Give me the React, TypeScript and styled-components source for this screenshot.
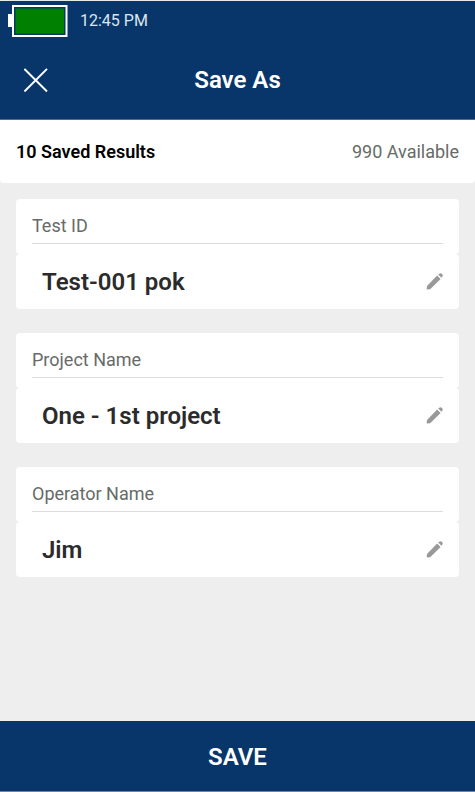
import React from "react";
import styled, { createGlobalStyle } from "styled-components";

const GlobalStyle = createGlobalStyle`
  *, *::before, *::after { box-sizing: border-box; }
  body {
    margin: 0;
    background: #eeeeee;
    font-family: Roboto, "Liberation Sans", sans-serif;
  }
`;

const Screen = styled.div`
  display: flex;
  flex-direction: column;
  min-height: 100vh;
  border-top: 1px solid #e4e9ee;
  border-bottom: 1px solid #6b86a4;
`;

const StatusBar = styled.div`
  display: flex;
  align-items: center;
  gap: 12px;
  height: 39px;
  padding-left: 8px;
  background: #08366a;
  color: #dde5ee;
  font-size: 16px;
  line-height: 20px;
`;

const Header = styled.header`
  display: grid;
  grid-template-columns: 40px 1fr 40px;
  align-items: center;
  height: 80px;
  padding: 0 16px;
  background: #08366a;
  border-bottom: 1px solid #4a6c93;
`;

const Title = styled.h1`
  margin: 0;
  color: #ffffff;
  font-size: 24px;
  font-weight: 600;
  line-height: 32px;
  text-align: center;
`;

const IconButton = styled.button`
  display: flex;
  flex: none;
  align-items: center;
  justify-content: center;
  padding: 0;
  border: 0;
  background: none;
  cursor: pointer;
`;

const Summary = styled.section`
  display: flex;
  align-items: center;
  justify-content: space-between;
  height: 63px;
  padding: 0 16px;
  border-radius: 0 0 4px 4px;
  background: #ffffff;
  font-size: 18px;
  line-height: 22px;
`;

const Saved = styled.strong`
  color: #000000;
  font-weight: 600;
`;

const Available = styled.span`
  color: #666b67;
`;

const Form = styled.form`
  display: flex;
  flex: 1;
  flex-direction: column;
`;

const Fields = styled.div`
  display: flex;
  flex: 1;
  flex-direction: column;
  gap: 24px;
  padding: 16px;
`;

const CardTop = styled.div`
  height: 55px;
  padding: 0 16px;
  border-radius: 4px;
  background: #ffffff;
`;

const Label = styled.label`
  display: block;
  padding: 16px 0 6px;
  border-bottom: 1px solid #dcdcdc;
  color: #666b67;
  font-size: 18px;
  line-height: 22px;
`;

const CardBody = styled.div`
  display: flex;
  align-items: center;
  height: 55px;
  padding: 0 16px 0 26px;
  border-radius: 4px;
  background: #ffffff;
`;

const Value = styled.input`
  flex: 1;
  min-width: 0;
  height: 32px;
  padding: 0;
  border: 0;
  background: none;
  color: #2b2b2b;
  font-family: inherit;
  font-size: 24px;
  font-weight: 600;
`;

const SaveButton = styled.button`
  height: 70px;
  padding: 2px 0 0;
  border: 0;
  background: #08366a;
  color: #ffffff;
  font-family: inherit;
  font-size: 24px;
  font-weight: 600;
  line-height: 32px;
  cursor: pointer;
`;

const BatteryIcon = () => (
  <svg width="60" height="32" viewBox="0 0 60 32" role="img" aria-label="Battery full">
    <rect x="0" y="9" width="5" height="13" fill="#fff" />
    <rect x="5" y="1" width="53.5" height="30" fill="#08366a" stroke="#fff" strokeWidth="2" />
    <rect x="7" y="3" width="49.5" height="26" fill="#008000" stroke="#08366a" strokeWidth="1" />
  </svg>
);

const CloseIcon = () => (
  <svg width="24" height="24" viewBox="0 0 24 24" fill="none" stroke="#fff" strokeWidth="2" aria-hidden="true">
    <path d="M.4.9l22.6 22.6M23 .9L.4 23.5" />
  </svg>
);

const PencilIcon = () => (
  <svg width="17" height="17" viewBox="0 0 17 17" fill="#999" aria-hidden="true">
    <path d="M11.1 2.5l3.5 3.5L4.7 15.7c-.4.4-.8.6-1.3.6l-1.8.2c-.6.1-1-.4-.9-.9l.2-1.8c.1-.5.3-.9.6-1.3z" />
    <path d="M12.2 1.6L13.2.8c.7-.7 1.9-.7 2.6 0l.4.4c.7.7.7 1.8 0 2.6l-.8 1z" />
  </svg>
);

const fields = [
  { id: "test-id", label: "Test ID", value: "Test-001 pok" },
  { id: "project-name", label: "Project Name", value: "One - 1st project" },
  { id: "operator-name", label: "Operator Name", value: "Jim" },
];

export default function App() {
  return (
    <Screen>
      <GlobalStyle />
      <StatusBar>
        <BatteryIcon />
        <time dateTime="12:45">12:45 PM</time>
      </StatusBar>
      <Header>
        <IconButton type="button" aria-label="Close">
          <CloseIcon />
        </IconButton>
        <Title>Save As</Title>
      </Header>
      <Summary>
        <Saved>10 Saved Results</Saved>
        <Available>990 Available</Available>
      </Summary>
      <Form onSubmit={(event: React.FormEvent) => event.preventDefault()}>
        <Fields>
          {fields.map((field) => (
            <div key={field.id}>
              <CardTop>
                <Label htmlFor={field.id}>{field.label}</Label>
              </CardTop>
              <CardBody>
                <Value id={field.id} type="text" defaultValue={field.value} />
                <IconButton type="button" aria-label={`Edit ${field.label}`}>
                  <PencilIcon />
                </IconButton>
              </CardBody>
            </div>
          ))}
        </Fields>
        <SaveButton type="submit">SAVE</SaveButton>
      </Form>
    </Screen>
  );
}
